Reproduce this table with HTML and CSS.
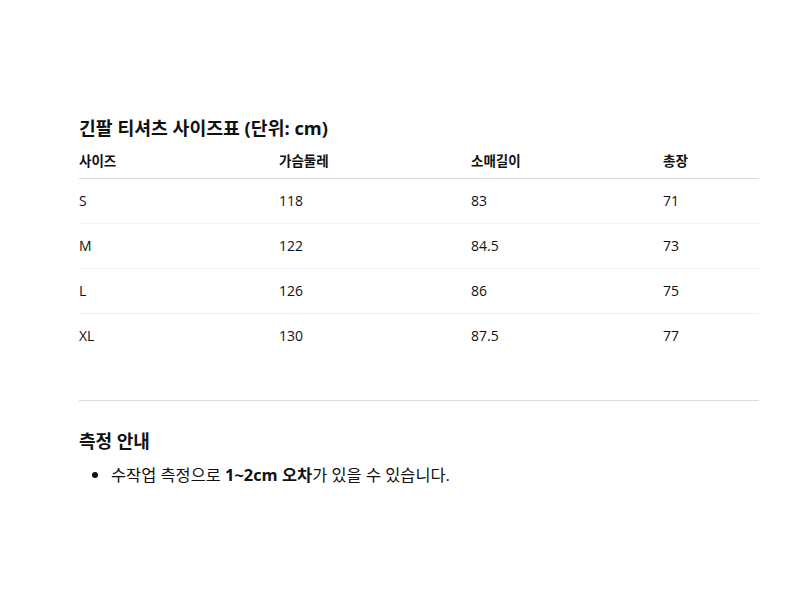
FILE: index.html
```html
<!DOCTYPE html>
<html lang="ko">
<head>
<meta charset="utf-8">
<link rel="stylesheet" href="styles.css">
</head>
<body>
<div class="page">
  <h2 class="title">긴팔 티셔츠 사이즈표 (단위: cm)</h2>
  <table class="size-table">
    <thead>
      <tr><th class="c1">사이즈</th><th class="c2">가슴둘레</th><th class="c3">소매길이</th><th class="c4">총장</th></tr>
    </thead>
    <tbody>
      <tr><td>S</td><td>118</td><td>83</td><td>71</td></tr>
      <tr><td>M</td><td>122</td><td>84.5</td><td>73</td></tr>
      <tr><td>L</td><td>126</td><td>86</td><td>75</td></tr>
      <tr><td>XL</td><td>130</td><td>87.5</td><td>77</td></tr>
    </tbody>
  </table>
  <hr class="divider">
  <h3 class="subtitle">측정 안내</h3>
  <ul class="notes">
    <li>수작업 측정으로 <strong>1~2cm 오차</strong>가 있을 수 있습니다.</li>
  </ul>
</div>
</body>
</html>
```
FILE: styles.css
```css
html, body {
  margin: 0;
  padding: 0;
  background: #fff;
}
body {
  font-family: "Open Sans", "Noto Sans CJK KR", sans-serif;
  color: #111;
}
.page {
  padding: 114px 41px 0 79px;
}
.title {
  margin: 0;
  font-size: 18.3px;
  line-height: 27px;
  font-weight: 700;
}
.size-table {
  width: 680px;
  border-collapse: collapse;
  font-size: 14px;
}
.size-table th {
  text-align: left;
  font-weight: 700;
  font-size: 13.5px;
  line-height: 20px;
  padding: 10px 0 7px;
  border-bottom: 1px solid #dcdcdc;
}
.c1 { width: 200px; }
.c2 { width: 192px; }
.c3 { width: 192px; }
.c4 { width: 96px; }
.size-table td {
  padding: 12px 0;
  line-height: 20px;
  border-bottom: 1px solid #f1f1f1;
}
.size-table tbody tr:last-child td {
  border-bottom: none;
}
.divider {
  margin: 42px 0 0;
  border: 0;
  border-top: 1px solid #dcdcdc;
  height: 0;
}
.subtitle {
  margin: 27px 0 0;
  font-size: 18px;
  line-height: 27px;
  font-weight: 700;
}
.notes {
  margin: 8px 0 0;
  padding-left: 32px;
  font-size: 16.4px;
  line-height: 24px;
}
.notes strong {
  font-weight: 700;
}
```
